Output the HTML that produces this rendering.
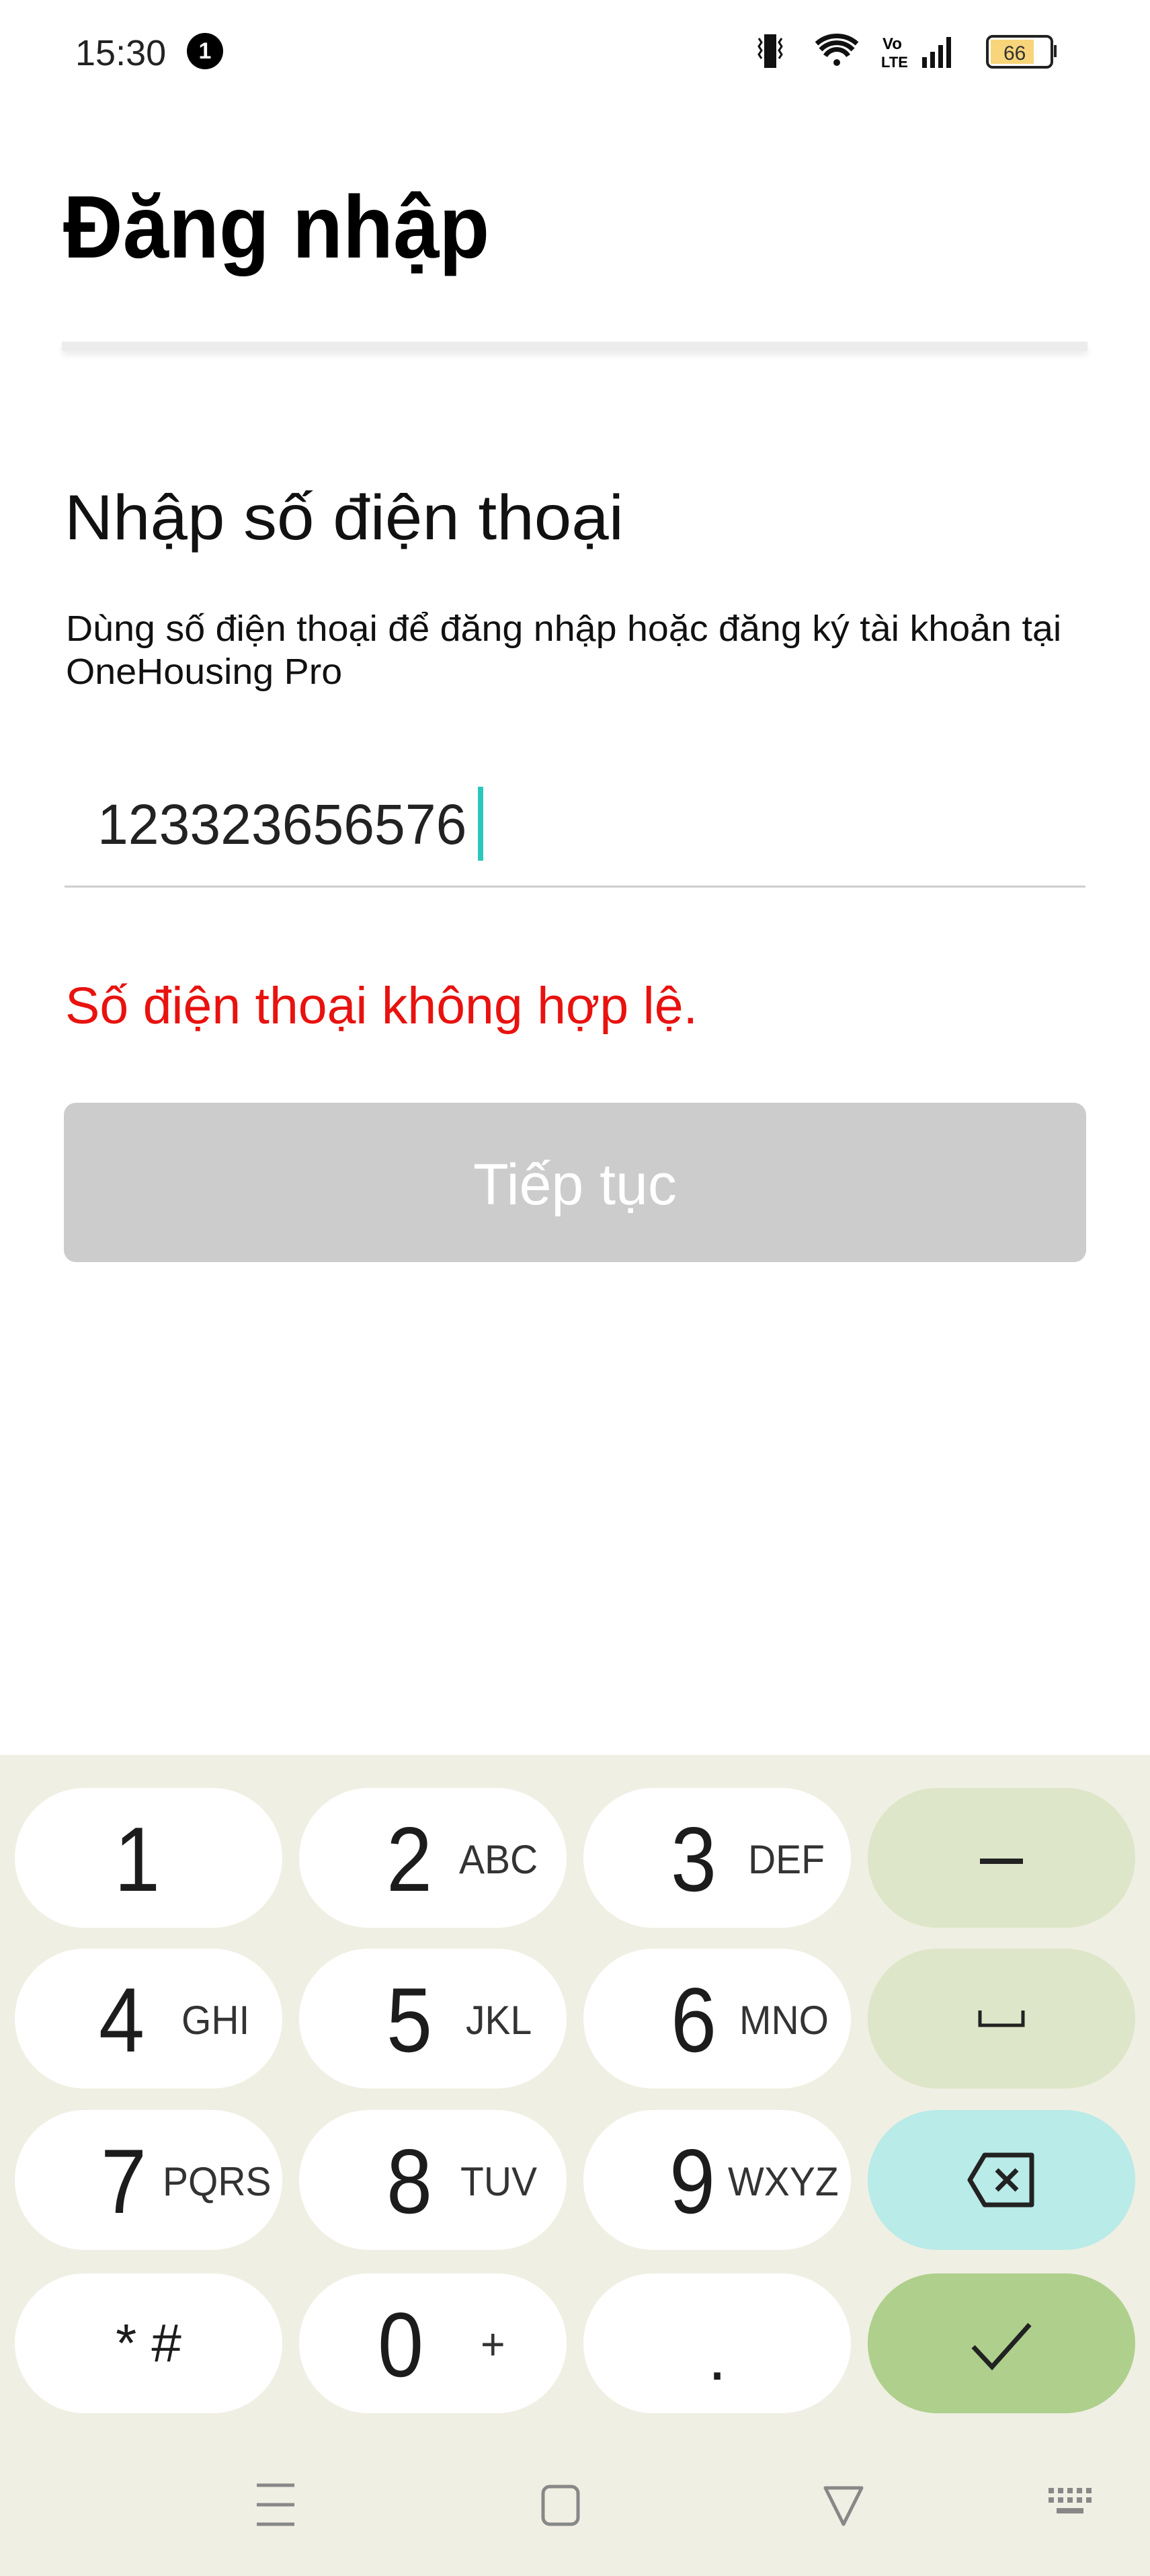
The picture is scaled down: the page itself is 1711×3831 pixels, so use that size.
<!DOCTYPE html>
<html><head><meta charset="utf-8"><style>
*{margin:0;padding:0;box-sizing:border-box}
body{width:1711px;height:3831px;background:#fff;font-family:"Liberation Sans",sans-serif;position:relative;overflow:hidden;color:#111}
.abs{position:absolute;white-space:nowrap}
.kb{position:absolute;left:0;top:2610px;width:1711px;height:1221px;background:#f0efe3}
.key{position:absolute;width:398px;height:208px;border-radius:104px;background:#fff;display:flex;align-items:center;justify-content:center;color:#1c1c1c}
.d{position:absolute;top:38px;font-size:136px;line-height:1;transform:scaleX(0.9);transform-origin:left}
.l{position:absolute;top:77px;font-size:60px;line-height:1;color:#333;transform:scaleX(0.95);transform-origin:left}
</style></head><body>
<div class="abs" style="left:112px;top:48px;font-size:54px;color:#222">15:30</div>
<div class="abs" style="left:278px;top:49px;width:54px;height:54px;border-radius:50%;background:#000;color:#fff;font-size:34px;font-weight:bold;text-align:center;line-height:54px">1</div>
<svg class="abs" style="left:1125px;top:45px" width="460" height="65" viewBox="0 0 460 65">
<rect x="12" y="6" width="18" height="50" fill="#111"/><path d="M4 12l4 6-4 6 4 6-4 6 4 6M38 12l-4 6 4 6-4 6 4 6-4 6" stroke="#111" stroke-width="3" fill="none"/>
<path d="M90 20a45 45 0 0 1 60 0M96 29a33 33 0 0 1 48 0M103 38a20 20 0 0 1 34 0" stroke="#111" stroke-width="7" fill="none"/><circle cx="120" cy="48" r="5" fill="#111"/>
<text x="188" y="28" font-size="24" font-weight="bold" font-family="Liberation Sans">Vo</text><text x="186" y="55" font-size="22" font-weight="bold" font-family="Liberation Sans">LTE</text>
<rect x="247" y="40" width="7" height="16" fill="#111"/><rect x="259" y="32" width="7" height="24" fill="#111"/><rect x="271" y="22" width="7" height="34" fill="#111"/><rect x="283" y="10" width="7" height="46" fill="#111"/>
<rect x="344" y="9" width="96" height="46" rx="8" fill="none" stroke="#222" stroke-width="4"/><rect x="349" y="14" width="64" height="36" fill="#f8d57a"/><rect x="443" y="22" width="4" height="18" fill="#222"/>
<text x="368" y="44" font-size="30" fill="#333" font-family="Liberation Sans">66</text></svg>
<div class="abs" style="left:94px;top:262px;font-size:132px;font-weight:bold;color:#000;transform:scaleX(0.93);transform-origin:left">Đăng nhập</div>
<div class="abs" style="left:92px;top:508px;width:1526px;height:14px;background:#ececec;box-shadow:0 6px 10px rgba(0,0,0,0.08)"></div>
<div class="abs" style="left:96px;top:716px;font-size:95px;color:#111;transform:scaleX(1.05);transform-origin:left">Nhập số điện thoại</div>
<div class="abs" style="left:98px;top:903px;font-size:54px;line-height:64px;color:#111;transform:scaleX(1.03);transform-origin:left">Dùng số điện thoại để đăng nhập hoặc đăng ký tài khoản tại<br>OneHousing Pro</div>
<div class="abs" style="left:145px;top:1178px;font-size:84px;color:#222;transform:scaleX(0.98);transform-origin:left">123323656576</div>
<div class="abs" style="left:711px;top:1170px;width:8px;height:110px;background:#2cc7bc"></div>
<div class="abs" style="left:96px;top:1317px;width:1519px;height:3px;background:#cfcfcf"></div>
<div class="abs" style="left:97px;top:1452px;font-size:77px;color:#e8120f;transform:scaleX(1.0);transform-origin:left">Số điện thoại không hợp lệ.</div>
<div class="abs" style="left:95px;top:1640px;width:1521px;height:237px;border-radius:18px;background:#cccccc;color:#fff;font-size:86px;text-align:center;line-height:245px">Tiếp tục</div>
<div class="kb"></div>
<div class="key" style="left:22px;top:2659px"><span class="d" style="left:148px">1</span></div>
<div class="key" style="left:445px;top:2659px"><span class="d" style="left:130px">2</span><span class="l" style="left:238px">ABC</span></div>
<div class="key" style="left:868px;top:2659px"><span class="d" style="left:130px">3</span><span class="l" style="left:245px">DEF</span></div>
<div class="key" style="left:1291px;top:2659px;background:#dde6c8"><span style="display:block;width:64px;height:8px;background:#222;margin-top:10px"></span></div>
<div class="key" style="left:22px;top:2898px"><span class="d" style="left:125px">4</span><span class="l" style="left:248px">GHI</span></div>
<div class="key" style="left:445px;top:2898px"><span class="d" style="left:130px">5</span><span class="l" style="left:248px">JKL</span></div>
<div class="key" style="left:868px;top:2898px"><span class="d" style="left:130px">6</span><span class="l" style="left:232px">MNO</span></div>
<div class="key" style="left:1291px;top:2898px;background:#dde6c8"><svg width="70" height="30"><path d="M3 3v22h64V3" stroke="#222" stroke-width="5" fill="none"/></svg></div>
<div class="key" style="left:22px;top:3138px"><span class="d" style="left:128px">7</span><span class="l" style="left:220px">PQRS</span></div>
<div class="key" style="left:445px;top:3138px"><span class="d" style="left:130px">8</span><span class="l" style="left:240px">TUV</span></div>
<div class="key" style="left:868px;top:3138px"><span class="d" style="left:128px">9</span><span class="l" style="left:215px">WXYZ</span></div>
<div class="key" style="left:1291px;top:3138px;background:#b9ebe8"><svg width="110" height="90" viewBox="0 0 110 90"><path d="M30 8h70v74H30L8 45z" stroke="#222" stroke-width="7" fill="none" stroke-linejoin="round"/><path d="M48 30l30 30M78 30l-30 30" stroke="#222" stroke-width="7"/></svg></div>
<div class="key" style="left:22px;top:3381px"><span style="font-size:80px">* #</span></div>
<div class="key" style="left:445px;top:3381px"><span class="d" style="left:117px">0</span><span class="l" style="left:270px;font-size:66px;top:72px">+</span></div>
<div class="key" style="left:868px;top:3381px"><span style="font-size:100px;margin-top:40px">.</span></div>
<div class="key" style="left:1291px;top:3381px;background:#aed08c"><svg width="100" height="80"><path d="M8 45l28 30L92 12" stroke="#222" stroke-width="7" fill="none"/></svg></div>
<svg class="abs" style="left:0;top:3690px" width="1711" height="80">
<path d="M382 6h56M382 35h56M382 64h56" stroke="#888" stroke-width="5"/>
<rect x="808" y="8" width="52" height="56" rx="10" stroke="#888" stroke-width="5" fill="none"/>
<path d="M1228 10h54l-27 54z" stroke="#888" stroke-width="5" fill="none" stroke-linejoin="round"/>
<g fill="#888"><rect x="1560" y="10" width="8" height="8"/><rect x="1574" y="10" width="8" height="8"/><rect x="1588" y="10" width="8" height="8"/><rect x="1602" y="10" width="8" height="8"/><rect x="1616" y="10" width="8" height="8"/><rect x="1560" y="24" width="8" height="8"/><rect x="1574" y="24" width="8" height="8"/><rect x="1588" y="24" width="8" height="8"/><rect x="1602" y="24" width="8" height="8"/><rect x="1616" y="24" width="8" height="8"/><rect x="1572" y="40" width="40" height="8"/></g>
</svg>
</body></html>
